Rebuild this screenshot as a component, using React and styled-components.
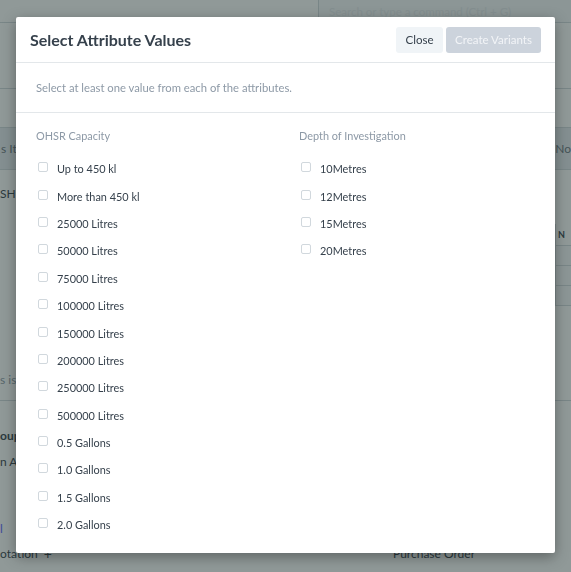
import React from 'react';
import styled, { createGlobalStyle } from 'styled-components';

const Global = createGlobalStyle`
  html, body { margin: 0; padding: 0; width: 571px; height: 572px; overflow: hidden; background: #fff; }
  body { font-family: Lato, "Noto Sans", sans-serif; color: #36414c; }
  * { box-sizing: border-box; }
`;

/* ---------- background page ---------- */
const Page = styled.div`
  width: 571px;
  height: 572px;
  overflow: hidden;
  background: #fff;
  position: relative;
`;
const Navbar = styled.div`
  height: 23px;
  border-bottom: 1px solid #d1d8dd;
  display: flex;
  justify-content: flex-end;
`;
const Search = styled.div`
  width: 253px;
  border-left: 1px solid #d1d8dd;
  padding-left: 10px;
  font-size: 11.5px;
  line-height: 23px;
  color: #e6eaee;
  background: #f7f8fa;
  white-space: nowrap;
  overflow: hidden;
`;
const PageHead = styled.div`
  height: 66px;
  border-bottom: 1px solid #d1d8dd;
`;
const Content = styled.div`
  padding-top: 38px;
`;
const TableHead = styled.div`
  height: 43px;
  background: #e6ebf0;
  border-top: 1px solid #d1d8dd;
  border-bottom: 1px solid #d1d8dd;
  display: flex;
  justify-content: space-between;
  align-items: center;
  font-size: 12px;
  color: #6c7680;
  padding: 0 0 0 1px;
`;
const TableRow = styled.div`
  height: 46px;
  display: flex;
  justify-content: space-between;
  align-items: center;
  font-size: 12px;
  color: #36414c;
`;
const Grid = styled.div`
  display: flex;
  justify-content: flex-end;
  height: 156px;
  padding-top: 8px;
`;
const GridCells = styled.div`
  width: 16px;
  display: flex;
  flex-direction: column;
  font-size: 9px;
  font-weight: 700;
  color: #36414c;
`;
const Cell = styled.div`
  height: ${p => p.$h || 20}px;
  border-bottom: 1px solid #d1d8dd;
  border-left: 1px solid #d1d8dd;
  background: ${p => (p.$head ? '#fff' : '#f7f8fa')};
  display: flex;
  align-items: center;
  padding-left: 2px;
`;
const Muted = styled.div`
  font-size: 12px;
  color: #8d99a6;
  height: 29px;
  border-bottom: 1px solid #d1d8dd;
`;
const Bold = styled.div`
  font-size: 12px;
  font-weight: 700;
  padding-top: 27px;
`;
const Plain = styled.div`
  font-size: 12px;
  padding-top: 11px;
`;
const Link = styled.div`
  font-size: 12px;
  color: #5e64ff;
  padding-top: 52px;
`;
const Footer = styled.div`
  display: flex;
  align-items: center;
  font-size: 12px;
  padding-top: 10px;
`;
const AddBtn = styled.span`
  margin-left: 6px;
  font-size: 14px;
  line-height: 1;
  color: #36414c;
`;
const FooterRight = styled.span`
  margin-left: auto;
  width: 178px;
`;

const Backdrop = styled.div`
  position: fixed;
  inset: 0;
  background: rgba(34, 52, 50, 0.5);
`;

/* ---------- modal ---------- */
const Modal = styled.div`
  position: fixed;
  left: 16px;
  top: 17px;
  width: 539px;
  height: 536px;
  background: #fff;
  border-radius: 2px;
  box-shadow: 0 4px 14px rgba(0, 0, 0, 0.35);
  display: flex;
  flex-direction: column;
`;
const Header = styled.div`
  height: 46px;
  flex: none;
  display: flex;
  align-items: center;
  padding: 0 14px;
  border-bottom: 1px solid #e3e7ea;
`;
const Title = styled.h4`
  margin: 0;
  flex: 1;
  font-size: 16px;
  font-weight: 700;
  color: #36414c;
`;
const Button = styled.button`
  height: 26px;
  width: ${p => (p.$primary ? 95 : 47)}px;
  border: none;
  border-radius: 3px;
  font-family: inherit;
  font-size: 11.5px;
  padding: 0;
  margin-left: ${p => (p.$primary ? 3 : 0)}px;
  background: ${p => (p.$primary ? '#ccd3dc' : '#f0f4f7')};
  color: ${p => (p.$primary ? '#f2f4f7' : '#36414c')};
`;
const Desc = styled.div`
  height: 50px;
  flex: none;
  display: flex;
  align-items: center;
  padding: 0 20px;
  font-size: 11.25px;
  color: #8d99a6;
  border-bottom: 1px solid #e3e7ea;
`;
const Body = styled.div`
  padding: 14px 20px;
  display: grid;
  grid-template-columns: 263px 1fr;
`;
const ColTitle = styled.div`
  font-size: 10.9px;
  color: #8d99a6;
  height: 18px;
  line-height: 18px;
  margin-bottom: 10px;
`;
const Row = styled.label`
  height: 27.4px;
  display: flex;
  align-items: center;
  font-size: 10.9px;
  color: #36414c;
`;
const Box = styled.span`
  width: 10px;
  height: 10px;
  margin: -3px 9px 0 2px;
  border: 1px solid #d1d8dd;
  border-radius: 2px;
  background: #fff;
  flex: none;
`;

const capacity = [
  'Up to 450 kl', 'More than 450 kl', '25000 Litres', '50000 Litres', '75000 Litres',
  '100000 Litres', '150000 Litres', '200000 Litres', '250000 Litres', '500000 Litres',
  '0.5 Gallons', '1.0 Gallons', '1.5 Gallons', '2.0 Gallons',
];
const depth = ['10Metres', '12Metres', '15Metres', '20Metres'];

const Column = ({ title, items }) => (
  <div>
    <ColTitle>{title}</ColTitle>
    {items.map(v => (
      <Row key={v}>
        <Box />
        {v}
      </Row>
    ))}
  </div>
);

export default function App() {
  return (
    <>
      <Global />
      <Page>
        <Navbar>
          <Search>Search or type a command (Ctrl + G)</Search>
        </Navbar>
        <PageHead />
        <Content>
          <TableHead><span>s Ite</span><span>No</span></TableHead>
          <TableRow><span>SHB</span></TableRow>
          <Grid>
            <GridCells>
              <Cell $head $h={22}>N</Cell>
              <Cell $h={20} />
              <Cell $h={20} />
              <Cell $h={20} />
            </GridCells>
          </Grid>
          <Muted>s is l</Muted>
          <Bold>oups</Bold>
          <Plain>n Al</Plain>
          <Link>l</Link>
          <Footer>
            <span>otation</span>
            <AddBtn>+</AddBtn>
            <FooterRight>Purchase Order</FooterRight>
          </Footer>
        </Content>
        <Backdrop />
      </Page>
      <Modal>
        <Header>
          <Title>Select Attribute Values</Title>
          <Button>Close</Button>
          <Button $primary>Create Variants</Button>
        </Header>
        <Desc>Select at least one value from each of the attributes.</Desc>
        <Body>
          <Column title="OHSR Capacity" items={capacity} />
          <Column title="Depth of Investigation" items={depth} />
        </Body>
      </Modal>
    </>
  );
}
